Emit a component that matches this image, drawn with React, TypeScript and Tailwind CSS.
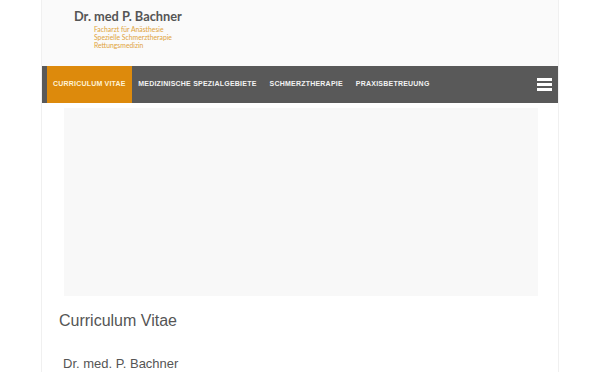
export default function App() {
  const nav = ["Medizinische Spezialgebiete", "Schmerztherapie", "Praxisbetreuung"];
  return (
    <div className="min-h-[375px] w-[600px] bg-white font-['Liberation_Sans',Arial,sans-serif]">
      <div className="mx-auto w-[518px] border-x border-[#f0f0f0] bg-white">
        {/* header */}
        <div className="h-[66px] bg-[#fafafa] pl-[32px] pt-[7px]">
          <div className="font-['Lato',sans-serif] text-[12.8px] font-bold leading-[18px] text-[#555]">
            Dr. med P. Bachner
          </div>
          <div className="ml-[20px] font-['Lato',sans-serif] text-[6.8px] leading-[8px] text-[#e0a33a]">
            <div>Facharzt für Anästhesie</div>
            <div>Spezielle Schmerztherapie</div>
            <div>Rettungsmedizin</div>
          </div>
        </div>

        {/* nav */}
        <div className="flex h-[37px] items-stretch bg-[#595959] pl-[5px] pr-[6px]">
          <div className="flex items-center bg-[#dd8a0c] px-[6px] text-[7px] font-bold uppercase tracking-[0.2px] text-[#fff3d6]">
            Curriculum Vitae
          </div>
          {nav.map((n) => (
            <div
              key={n}
              className="flex items-center px-[6.5px] text-[7px] font-bold uppercase tracking-[0.22px] text-[#f2f2f2]"
            >
              {n}
            </div>
          ))}
          <div className="ml-auto flex flex-col justify-center gap-[2px]">
            <span className="block h-[3px] w-[15px] bg-white" />
            <span className="block h-[3px] w-[15px] bg-white" />
            <span className="block h-[3px] w-[15px] bg-white" />
          </div>
        </div>

        {/* image placeholder */}
        <div className="px-[22px] pt-[5px]">
          <div className="h-[188px] w-[474px] bg-[#f8f8f8]" />
        </div>

        <h1 className="pl-[17px] pt-[15px] text-[16px] leading-[20px] text-[#555]">Curriculum Vitae</h1>
        <div className="pl-[21px] pt-[25px] text-[13px] leading-[16px] text-[#555]">Dr. med. P. Bachner</div>
      </div>
    </div>
  );
}
